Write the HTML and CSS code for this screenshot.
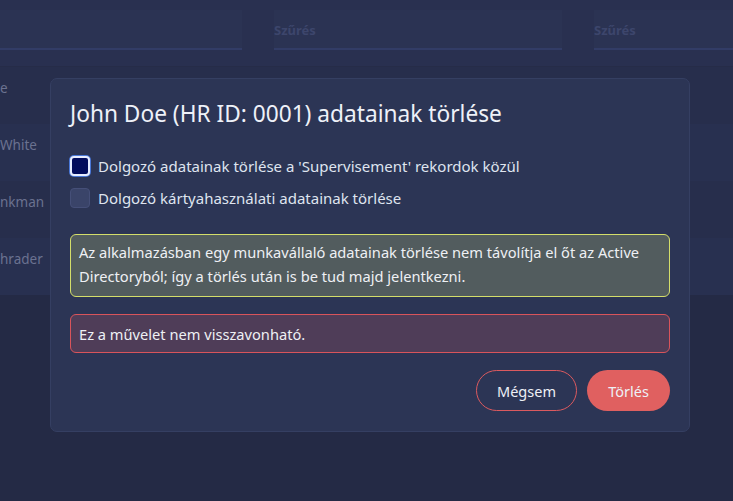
FILE: index.html
```html
<!DOCTYPE html>
<html lang="hu">
<head>
<meta charset="utf-8">
<link rel="stylesheet" href="styles.css">
</head>
<body>
<div class="page">
  <div class="filters">
    <div class="filter f1"></div>
    <div class="filter f2"><span>Szűrés</span></div>
    <div class="filter f3"><span>Szűrés</span></div>
  </div>
  <div class="rows">
    <div class="row r1">e</div>
    <div class="row r2">White</div>
    <div class="row r1">nkman</div>
    <div class="row r2">hrader</div>
  </div>
</div>

<div class="modal">
  <h1 class="title">John Doe (HR ID: 0001) adatainak törlése</h1>
  <label class="check">
    <span class="box checked"></span>
    <span>Dolgozó adatainak törlése a 'Supervisement' rekordok közül</span>
  </label>
  <label class="check">
    <span class="box"></span>
    <span>Dolgozó kártyahasználati adatainak törlése</span>
  </label>
  <div class="note warn">Az alkalmazásban egy munkavállaló adatainak törlése nem távolítja el őt az Active Directoryból; így a törlés után is be tud majd jelentkezni.</div>
  <div class="note danger">Ez a művelet nem visszavonható.</div>
  <div class="actions">
    <button class="btn outline">Mégsem</button>
    <button class="btn solid">Törlés</button>
  </div>
</div>
</body>
</html>
```

FILE: styles.css
```css
* { box-sizing: border-box; }
html, body { margin: 0; padding: 0; }
body {
  width: 733px;
  height: 501px;
  overflow: hidden;
  background: #242a45;
  font-family: "Noto Sans", "DejaVu Sans", sans-serif;
  position: relative;
}
.page { width: 733px; }
.filters {
  height: 67px;
  background: #293050;
  border-bottom: 1px solid #262c48;
  padding-top: 10px;
  display: flex;
  gap: 32px;
}
.filter {
  height: 40px;
  background: #2b3353;
  border-bottom: 2px solid #323c66;
  flex: none;
}
.filter span {
  display: block;
  font-size: 13px;
  font-weight: 700;
  color: #3d466c;
  padding-top: 11px;
}
.f1 { width: 242px; }
.f2 { width: 288px; }
.f3 { width: 139px; }
.rows { display: flex; flex-direction: column; }
.row {
  height: 57px;
  padding-top: 11px;
  line-height: 20px;
  font-size: 13.5px;
  color: #6b7290;
}
.r1 { background: #272e4c; }
.r2 { background: #283050; }

.modal {
  position: absolute;
  left: 50px;
  top: 78px;
  width: 640px;
  height: 354px;
  background: #2c3555;
  border: 1px solid #353f62;
  border-radius: 7px;
  padding: 19px 19px 20px 19px;
  display: flex;
  flex-direction: column;
  color: #e4e8f2;
}
.title {
  margin: 0 0 26px 0;
  font-size: 22.7px;
  font-weight: 400;
  line-height: 32px;
  color: #eef1f8;
}
.check {
  display: flex;
  align-items: center;
  gap: 8px;
  font-size: 15px;
  line-height: 20px;
  margin-bottom: 12px;
  color: #dfe4ef;
}
.box {
  width: 20px;
  height: 20px;
  border-radius: 4px;
  background: #3a4469;
  border: 1px solid #454f78;
  flex: none;
}
.box.checked {
  background: #020c5c;
  border: 2px solid #e6ecff;
  box-shadow: 0 0 0 1px #4a78d8;
}
.note {
  border-radius: 6px;
  padding: 7px 8px 6px 8px;
  font-size: 14.65px;
  line-height: 24px;
  color: #eef0f4;
}
.warn {
  margin-top: 14px;
  padding-top: 5px;
  padding-bottom: 8px;
  background: #525c5e;
  border: 1px solid #d4de6a;
}
.danger {
  margin-top: 17px;
  background: #4f3d58;
  border: 1px solid #d9545b;
}
.actions {
  margin-top: 17px;
  display: flex;
  justify-content: flex-end;
  gap: 10px;
}
.btn {
  height: 41px;
  border-radius: 21px;
  font-family: inherit;
  font-size: 14.5px;
  color: #eef0f6;
  padding: 0 19px;
}
.outline {
  background: transparent;
  border: 1px solid #dc5a5f;
  width: 101px;
}
.solid {
  background: #e06060;
  border: none;
  width: 83px;
}
```
